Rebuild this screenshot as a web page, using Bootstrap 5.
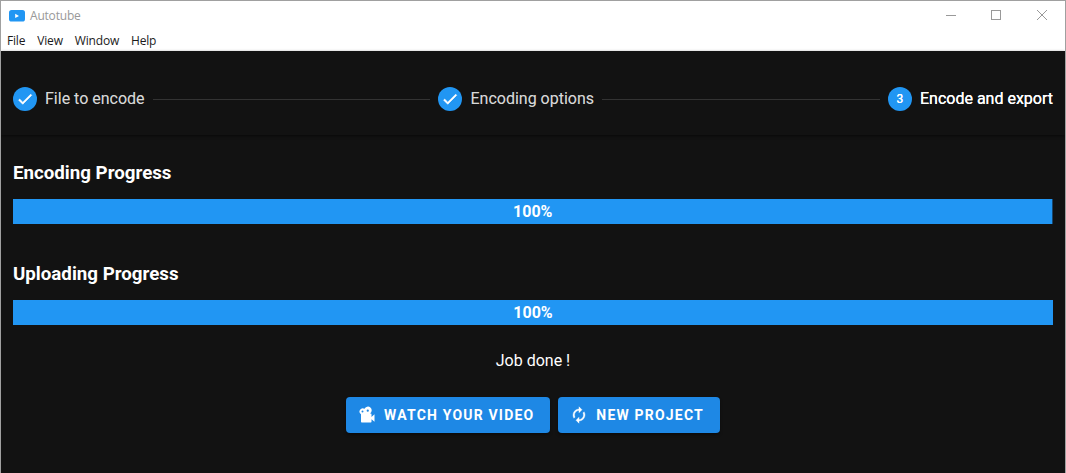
<!DOCTYPE html>
<html lang="en">
<head>
<meta charset="utf-8">
<meta name="viewport" content="width=device-width, initial-scale=1">
<title>Autotube</title>
<link href="https://cdn.jsdelivr.net/npm/bootstrap@5.3.0/dist/css/bootstrap.min.css" rel="stylesheet">
<style>
  body { font-family: Roboto, "Liberation Sans", sans-serif; font-size: 16px; line-height: 24px; background: #121212; color: #fff; }
  .app-window { height: 100vh; border: 1px solid #a0a0a0; border-bottom: 0; }
  .window-chrome { height: 50px; background: #fff; font-family: "Open Sans", "Noto Sans", sans-serif; font-size: 12px; line-height: 16px; }
  .title-row { height: 29px; padding-left: 8px; color: #999; }
  .title-text { margin-left: 5px; letter-spacing: -.2px; }
  .win-btn { width: 46px; height: 29px; }
  .win-min { padding-left: 1px; }
  .menu-row { height: 21px; padding-left: 6px; color: #1a1a1a; gap: 12px; letter-spacing: -.18px; }
  .stepper { height: 84px; padding: 12px 12px 0; box-shadow: 0 1px 3px rgba(0,0,0,.55); }
  .stepper-inner { height: 72px; gap: 8px; }
  .step-dot { width: 24px; height: 24px; background: #2196f3; font-size: 12px; }
  .step-done { color: rgba(255,255,255,.8); text-shadow: 0 0 0 rgba(255,255,255,.25); }
  .step-current { text-shadow: 0 0 0 #fff; }
  .step-line { height: 1px; background: #333; }
  .work-area { padding: 26px 12px 0; }
  .section-title { font-size: 18.72px; line-height: 24px; margin-bottom: 14px; }
  .progress + .section-title { margin-top: 38px; }
  .progress { --bs-progress-height: 25px; --bs-progress-bg: #17466e; --bs-progress-bar-bg: #2196f3; --bs-progress-border-radius: 0; --bs-progress-font-size: 16px; }
  .btn-app { --bs-btn-bg: #1e88e5; --bs-btn-color: #fff; --bs-btn-hover-bg: #2196f3; --bs-btn-hover-color: #fff; --bs-btn-border-width: 0; --bs-btn-border-radius: 4px; --bs-btn-padding-y: 0; --bs-btn-padding-x: 16px; --bs-btn-font-size: 14px; height: 36px; letter-spacing: 1.19px; box-shadow: 0 2px 3px rgba(0,0,0,.35); }
  .btn-app svg { margin-left: -4px; margin-right: 8px; }
</style>
</head>
<body>
<div class="app-window d-flex flex-column overflow-hidden">
  <header class="window-chrome flex-shrink-0">
    <div class="title-row d-flex align-items-center">
      <svg width="16" height="12" viewBox="0 0 16 12"><rect width="16" height="11.500" rx="2.600" fill="#2196f3"/><path d="M6.200 3.700v4.400L10 5.900z" fill="#fff"/></svg>
      <span class="title-text">Autotube</span>
      <div class="d-flex ms-auto">
        <span class="win-btn win-min d-flex align-items-center justify-content-center"><svg width="10" height="12"><path d="M0 5.500h10" stroke="#999"/></svg></span>
        <span class="win-btn d-flex align-items-center justify-content-center"><svg width="10" height="12"><rect x=".5" y=".5" width="9" height="9" fill="none" stroke="#999"/></svg></span>
        <span class="win-btn d-flex align-items-center justify-content-center"><svg width="10" height="12"><path d="M0 0l10 10M10 0L0 10" stroke="#999"/></svg></span>
      </div>
    </div>
    <nav class="menu-row d-flex align-items-center">
      <span>File</span><span>View</span><span>Window</span><span>Help</span>
    </nav>
  </header>

  <section class="stepper flex-shrink-0">
    <div class="stepper-inner d-flex align-items-center">
      <span class="step-dot rounded-circle d-flex align-items-center justify-content-center"><svg width="18" height="18" viewBox="0 0 24 24" fill="#fff"><path d="M21 7 9 19l-5.500-5.500 1.410-1.410L9 16.170 19.590 5.590z" stroke="#fff" stroke-width=".8"/></svg></span>
      <span class="step-done">File to encode</span>
      <span class="step-line flex-fill"></span>
      <span class="step-dot rounded-circle d-flex align-items-center justify-content-center"><svg width="18" height="18" viewBox="0 0 24 24" fill="#fff"><path d="M21 7 9 19l-5.500-5.500 1.410-1.410L9 16.170 19.590 5.590z" stroke="#fff" stroke-width=".8"/></svg></span>
      <span class="step-done">Encoding options</span>
      <span class="step-line flex-fill"></span>
      <span class="step-dot step-current rounded-circle d-flex align-items-center justify-content-center">3</span>
      <span class="step-current">Encode and export</span>
    </div>
  </section>

  <main class="work-area flex-fill">
    <h3 class="section-title fw-bold">Encoding Progress</h3>
    <div class="progress" role="progressbar" aria-valuenow="100"><div class="progress-bar fw-bold" style="width:99.95%">100%</div></div>
    <h3 class="section-title fw-bold">Uploading Progress</h3>
    <div class="progress" role="progressbar" aria-valuenow="100"><div class="progress-bar fw-bold" style="width:100%">100%</div></div>
    <p class="text-center mt-4 mb-4">Job done !</p>
    <div class="d-flex justify-content-center gap-2">
      <button class="btn btn-app d-inline-flex align-items-center fw-bold text-uppercase" type="button">
        <svg width="18" height="18" viewBox="0 0 24 24" fill="#fff"><path fill-rule="evenodd" d="M18 14.500V11a1 1 0 0 0-1-1h-1a5 5 0 1 0-7.300-6.200A4 4 0 1 0 4 10.900V21a1 1 0 0 0 1 1h12a1 1 0 0 0 1-1v-3.500l4 3.500V11zM13 4.700a1.500 1.500 0 1 1 0 3 1.500 1.500 0 0 1 0-3zM6 6a1.300 1.300 0 1 1 0 2.600A1.300 1.300 0 0 1 6 6z"/></svg>
        Watch your video
      </button>
      <button class="btn btn-app d-inline-flex align-items-center fw-bold text-uppercase" type="button">
        <svg width="18" height="18" viewBox="0 0 24 24" fill="#fff"><path stroke="#fff" stroke-width=".5" d="M12 6v3l4-4-4-4v3a8 8 0 0 0-8 8c0 1.570.46 3.030 1.240 4.260L6.700 14.800A5.900 5.900 0 0 1 6 12a6 6 0 0 1 6-6m6.760 1.740L17.300 9.200c.44.840.7 1.800.7 2.800a6 6 0 0 1-6 6v-3l-4 4 4 4v-3a8 8 0 0 0 8-8c0-1.570-.46-3.030-1.240-4.260z"/></svg>
        New project
      </button>
    </div>
  </main>
</div>
<script src="https://cdn.jsdelivr.net/npm/bootstrap@5.3.0/dist/js/bootstrap.bundle.min.js"></script>
</body>
</html>
